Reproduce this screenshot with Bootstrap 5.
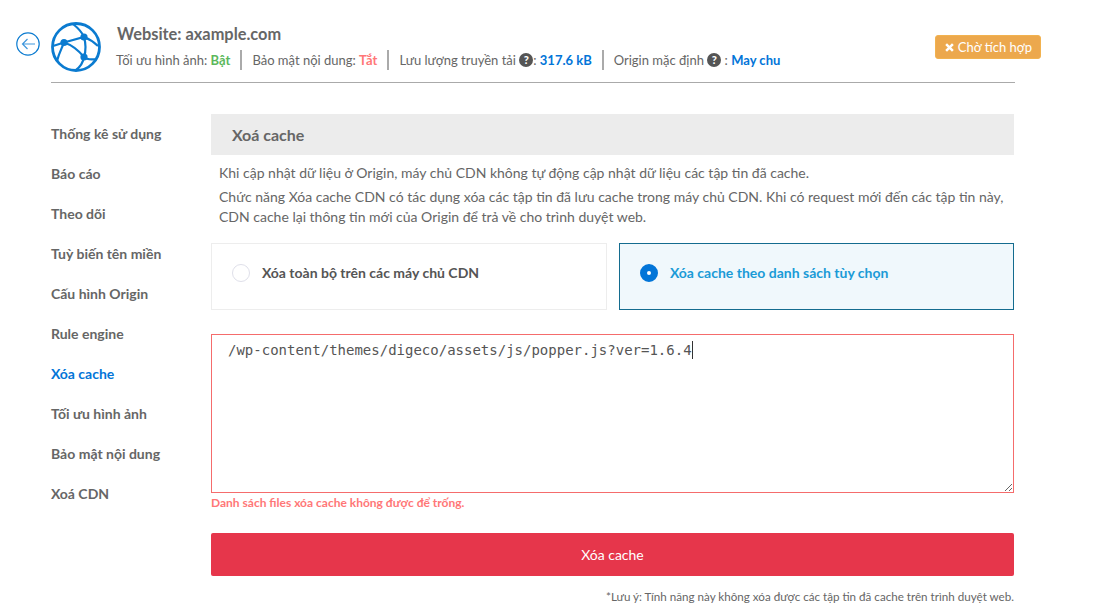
<!DOCTYPE html>
<html lang="vi">
<head>
<meta charset="utf-8">
<title>Xóa cache</title>
<link href="https://cdn.jsdelivr.net/npm/bootstrap@5.3.0/dist/css/bootstrap.min.css" rel="stylesheet">
<style>
html,body{height:608px;overflow:hidden}
body{font-family:Lato,"Liberation Sans",sans-serif;font-size:14px;color:#666;background:#fff;line-height:20px}
.page-wrap{padding:22px 99px 0 16px}
.back-ico{width:24px;height:24px;margin-top:10px;margin-right:11px;flex:none}
.top-area{flex:1;min-width:0}
.top-head{height:60px;border-bottom:1px solid #aaa;box-sizing:content-box}
.globe{width:50px;height:50px;flex:none;margin-right:16px}
.site-title{font-size:16.38px;font-weight:700;line-height:24px;color:#666;margin:0 0 4px}
.meta-row{font-size:13px;line-height:20px;color:#666;margin-left:-1px}
.meta-item{padding-right:10px;margin-right:10px;border-right:2px solid #aaa;height:20px;white-space:nowrap}
.meta-item:last-child{border:0}
.c-green{color:#5cb85c;font-weight:700}
.c-red{color:#f77;font-weight:700}
.c-blue{color:#0275d8;font-weight:700}
.qmark{display:inline-block;width:14px;height:14px;border-radius:50%;background:#555;color:#fff;font-size:11px;font-weight:900;line-height:14px;text-align:center;vertical-align:1px}
.btn-pending{display:flex;align-items:center;background:#eca84d;border:1px solid #f2b24f;color:#fff;font-size:13px;line-height:20px;padding:1px 8px 1px 9px;border-radius:3px;margin-top:13px;margin-right:-26px}
.btn-pending svg{width:9px;height:9px;margin-right:4px;flex:none}
.side-col{width:160px;flex:none;padding-top:31px}
.side-link{display:block;height:40px;line-height:40px;font-size:14px;font-weight:700;color:#666;text-decoration:none}
.side-link.is-on{color:#0275d8}
.main-col{width:803px;flex:none;padding-top:31px}
.sect-title{background:#ececec;height:41px;line-height:42px;padding-left:21px;font-size:16px;font-weight:700;color:#666;margin:0}
.intro{padding:8px 8px 0;margin:0 0 16px;color:#666}
.intro p{margin:0 0 4px;line-height:20px}
.intro p:last-child{margin:0}
.opt-box{width:396px;height:67px;border:1px solid #ededed;padding:0 20px 8px;gap:12px;font-weight:700;color:#555}
.opt-box.is-on{width:395px;border-color:#146c8f;background:#f0f8fc;color:#1a9bd7}
.radio-dot{width:18px;height:18px;border-radius:50%;border:1px solid #dfe0ea;background:#fff;flex:none}
.is-on .radio-dot{border:7px solid #0275d8;background:#fff}
.area-wrap{margin-top:24px;border:1px solid #f56c6c;height:159px}
.area-wrap textarea{display:block;width:801px;height:157px;border:0;border-radius:0;padding:4px 16px;font-family:"DejaVu Sans Mono",monospace;font-size:14px;line-height:22px;color:#555;outline:0;box-shadow:none;background:#fff}
.fake-caret{position:absolute;left:480px;top:6px;width:1px;height:18px;background:#333}
.err-text{font-size:12px;font-weight:700;color:#f77;line-height:20px;margin:0}
.del-btn{display:block;width:803px;height:43px;margin-top:20px;background:#e6364b;color:#fff;border:0;border-radius:2px;font-size:14px;padding:0;line-height:43px}
.foot-note{font-size:11.64px;line-height:18px;text-align:right;color:#666;margin:12px 0 0}
</style>
</head>
<body>
<div class="page-wrap d-flex">
  <svg class="back-ico" viewBox="0 0 24 24" fill="none" stroke="#0b7bd0" aria-hidden="true">
    <circle cx="12" cy="12" r="11.2" stroke-width="1.2"/>
    <path d="M19 12H6.5M11.5 7l-5 5 5 5" stroke-width="1.2" stroke="#3f97dd"/>
  </svg>
  <div class="top-area">
    <div class="top-head d-flex">
      <svg class="globe" viewBox="0 0 50 50" fill="none" stroke="#0b7bd0" stroke-width="2.2" aria-hidden="true">
        <circle cx="25" cy="25" r="23.5" stroke-width="2.8"/>
        <path d="M2 24 L13 20.5 L33 15 C38 17 43 20 47 24"/>
        <path d="M13 20.5 C21 23 28 29 33 35 C35 37 39 38 46 37"/>
        <path d="M22 2 C27 6 31 10 33 15 C35 22 35 29 33 35 C32 41 29 45 25 48"/>
        <path d="M6 39 C8 31 11 26 13 20.5"/>
        <circle cx="13" cy="20.5" r="3.6" fill="#0b7bd0" stroke="none"/>
        <circle cx="33" cy="15" r="3.6" fill="#0b7bd0" stroke="none"/>
        <circle cx="33" cy="35" r="3.6" fill="#0b7bd0" stroke="none"/>
      </svg>
      <div class="flex-grow-1">
        <h1 class="site-title">Website: axample.com</h1>
        <div class="meta-row d-flex">
          <div class="meta-item">Tối ưu hình ảnh: <span class="c-green">Bật</span></div>
          <div class="meta-item">Bảo mật nội dung: <span class="c-red">Tắt</span></div>
          <div class="meta-item">Lưu lượng truyền tải <span class="qmark">?</span>: <span class="c-blue">317.6 kB</span></div>
          <div class="meta-item">Origin mặc định <span class="qmark">?</span> : <span class="c-blue">May chu</span></div>
        </div>
      </div>
      <div><button type="button" class="btn btn-pending"><svg viewBox="0 0 8 8" fill="none" stroke="#fff" stroke-width="2.2" aria-hidden="true"><path d="M1 1l6 6M7 1L1 7"/></svg>Chờ tích hợp</button></div>
    </div>
    <div class="d-flex">
      <nav class="side-col">
        <a class="side-link" href="#">Thống kê sử dụng</a>
        <a class="side-link" href="#">Báo cáo</a>
        <a class="side-link" href="#">Theo dõi</a>
        <a class="side-link" href="#">Tuỳ biến tên miền</a>
        <a class="side-link" href="#">Cấu hình Origin</a>
        <a class="side-link" href="#">Rule engine</a>
        <a class="side-link is-on" href="#">Xóa cache</a>
        <a class="side-link" href="#">Tối ưu hình ảnh</a>
        <a class="side-link" href="#">Bảo mật nội dung</a>
        <a class="side-link" href="#">Xoá CDN</a>
      </nav>
      <main class="main-col">
        <h2 class="sect-title">Xoá cache</h2>
        <div class="intro">
          <p>Khi cập nhật dữ liệu ở Origin, máy chủ CDN không tự động cập nhật dữ liệu các tập tin đã cache.</p>
          <p>Chức năng Xóa cache CDN có tác dụng xóa các tập tin đã lưu cache trong máy chủ CDN. Khi có request mới đến các tập tin này, CDN cache lại thông tin mới của Origin để trả về cho trình duyệt web.</p>
        </div>
        <div class="d-flex justify-content-between">
          <div class="opt-box d-flex align-items-center"><span class="radio-dot"></span><span>Xóa toàn bộ trên các máy chủ CDN</span></div>
          <div class="opt-box is-on d-flex align-items-center"><span class="radio-dot"></span><span>Xóa cache theo danh sách tùy chọn</span></div>
        </div>
        <div class="area-wrap position-relative">
          <textarea spellcheck="false">/wp-content/themes/digeco/assets/js/popper.js?ver=1.6.4</textarea>
          <span class="fake-caret"></span>
        </div>
        <p class="err-text">Danh sách files xóa cache không được để trống.</p>
        <button type="button" class="btn del-btn">Xóa cache</button>
        <p class="foot-note">*Lưu ý: Tính năng này không xóa được các tập tin đã cache trên trình duyệt web.</p>
      </main>
    </div>
  </div>
</div>
<script src="https://cdn.jsdelivr.net/npm/bootstrap@5.3.0/dist/js/bootstrap.bundle.min.js"></script>
</body>
</html>
